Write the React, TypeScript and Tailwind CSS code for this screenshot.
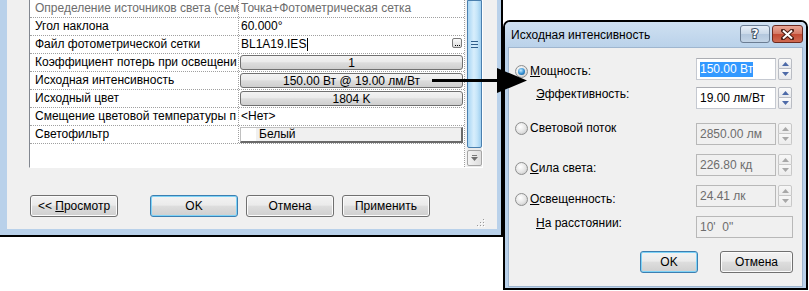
import React from "react";

const btnGrad =
  "bg-[linear-gradient(#f3f3f3,#ebebeb_45%,#dddddd_52%,#cfcfcf)]";

function Row({
  label,
  gray,
  children,
}: {
  label: string;
  gray?: boolean;
  children?: React.ReactNode;
}) {
  return (
    <div className="flex h-[18px] shrink-0 border-b border-dotted border-[#a0a0a0]">
      <div
        className={`w-[209px] shrink-0 border-r border-dotted border-[#a0a0a0] pl-[5px] leading-[17px] overflow-hidden whitespace-nowrap ${
          gray ? "text-[#6d6d6d]" : "text-black"
        }`}
      >
        {label}
      </div>
      <div className="flex-1 min-w-0 flex items-start">{children}</div>
    </div>
  );
}

function GridButton({ text }: { text: string }) {
  return (
    <div
      className={`mt-[1px] mx-[1px] flex-1 h-[15px] rounded-[3px] border border-[#707070] ${btnGrad} flex items-center justify-center leading-none`}
    >
      {text}
    </div>
  );
}

function DlgButton({
  children,
  def,
  w,
}: {
  children: React.ReactNode;
  def?: boolean;
  w: string;
}) {
  return (
    <div
      className={`${w} h-[22px] shrink-0 rounded-[3px] border ${
        def
          ? "border-[#3c7fb1] shadow-[inset_0_0_0_1px_#7fd3f7]"
          : "border-[#707070] shadow-[inset_0_0_0_1px_#fbfbfb]"
      } ${btnGrad} flex items-center justify-center leading-none`}
    >
      {children}
    </div>
  );
}

function Radio({ checked }: { checked?: boolean }) {
  return (
    <div className="w-[13px] h-[13px] shrink-0 rounded-full border border-[#8e8f8f] bg-[radial-gradient(circle_at_40%_35%,#ffffff,#e4e4e4_55%,#bcbcbc)] flex items-center justify-center">
      {checked && (
        <div className="w-[7px] h-[7px] rounded-full bg-[radial-gradient(circle_at_40%_35%,#c9ecff,#3a95d6_50%,#0b4a85)]" />
      )}
    </div>
  );
}

function Tri({ up, color }: { up?: boolean; color: string }) {
  return (
    <svg width="7" height="4" viewBox="0 0 7 4">
      <polygon
        points={up ? "0,4 7,4 3.5,0" : "0,0 7,0 3.5,4"}
        fill={color}
      />
    </svg>
  );
}

function Spinner({ enabled }: { enabled?: boolean }) {
  const c = enabled ? "#4d6aa8" : "#a7a7a7";
  const b = enabled
    ? "border-[#b9bcc3] bg-[linear-gradient(#fbfbfb,#e6e8ec)]"
    : "border-[#c8c8c8] bg-[linear-gradient(#f7f7f7,#ececec)]";
  return (
    <div className="ml-[2px] w-[14px] h-[22px] shrink-0 flex flex-col">
      <div
        className={`h-[11px] border rounded-t-[2px] ${b} flex items-center justify-center`}
      >
        <Tri up color={c} />
      </div>
      <div
        className={`h-[11px] border border-t-0 rounded-b-[2px] ${b} flex items-center justify-center`}
      >
        <Tri color={c} />
      </div>
    </div>
  );
}

function NumBox({
  children,
  enabled,
  spinner = true,
}: {
  children: React.ReactNode;
  enabled?: boolean;
  spinner?: boolean;
}) {
  return (
    <div className="flex">
      <div
        className={`${spinner ? "w-[80px]" : "w-[97px]"} h-[22px] border pl-[3px] flex items-center whitespace-nowrap ${
          enabled
            ? "bg-white border-[#c5c9d1] border-t-[#abadb3] text-black"
            : "bg-[#f0f0f0] border-[#b8b8b8] text-[#6d6d6d]"
        }`}
      >
        {children}
      </div>
      {spinner && <Spinner enabled={enabled} />}
    </div>
  );
}

function MainDialog() {
  return (
    <div className="w-[503px] h-[237px] shrink-0 bg-[#b9d1ea] border-r-2 border-b-2 border-black pl-[7px] pr-[4px] pb-[6px] flex">
      <div className="flex-1 bg-[#f0f0f0] flex flex-col relative">
        <div className="ml-[22px] w-[454px] h-[168px] shrink-0 flex border-l border-b border-r border-l-[#828790] border-b-white border-r-white">
          <div className="w-[435px] shrink-0 bg-white border-r border-dotted border-[#a0a0a0] flex flex-col">
            <Row label="Определение источников света (сем" gray>
              <div className="pl-[2px] leading-[17px] whitespace-nowrap text-[#6d6d6d]">
                Точка+Фотометрическая сетка
              </div>
            </Row>
            <Row label="Угол наклона">
              <div className="pl-[2px] leading-[17px]">60.000°</div>
            </Row>
            <Row label="Файл фотометрической сетки">
              <div className="flex-1 flex items-start">
                <div className="pl-[2px] leading-[17px]">BL1A19.IES</div>
                <div className="mt-[2px] ml-[1px] w-[1px] h-[13px] bg-black" />
                <div className="ml-auto mr-[2px] mt-[2px] w-[10px] h-[10px] rounded-[2px] border border-[#7a7a7a] bg-[linear-gradient(#fafafa,#dcdcdc)] flex items-end justify-center gap-[1px] pb-[1px]">
                  <div className="w-[1px] h-[1px] bg-black" />
                  <div className="w-[1px] h-[1px] bg-black" />
                  <div className="w-[1px] h-[1px] bg-black" />
                </div>
              </div>
            </Row>
            <Row label="Коэффициент потерь при освещени">
              <GridButton text="1" />
            </Row>
            <Row label="Исходная интенсивность">
              <GridButton text="150.00 Вт @ 19.00 лм/Вт" />
            </Row>
            <Row label="Исходный цвет">
              <GridButton text="1804 K" />
            </Row>
            <Row label="Смещение цветовой температуры п">
              <div className="pl-[2px] leading-[17px]">&lt;Нет&gt;</div>
            </Row>
            <Row label="Светофильтр">
              <div className="mt-[1px] mx-[1px] flex-1 h-[16px] flex border border-[#c0c0c0] border-r-2 border-b-2 border-r-[#6a6a6a] border-b-[#6a6a6a]">
                <div className="w-[15px] bg-white" />
                <div className="flex-1 bg-[#f0f0f0] pl-[3px] leading-[13px]">
                  Белый
                </div>
              </div>
            </Row>
          </div>
          <div className="w-[2px] shrink-0 bg-[#f4f4f4]" />
          <div className="w-[15px] shrink-0 flex flex-col bg-[#ebebeb]">
            <div className="h-[148px] shrink-0 rounded-b-[2px] border border-[#4a7fae] bg-[linear-gradient(to_right,#a9d6f4,#d8eefc_45%,#c5e5f9_70%,#9fcff0)] flex flex-col items-center pt-[40px] gap-[2px]">
              <div className="w-[7px] h-[1px] bg-[#2f5f8c]" />
              <div className="w-[7px] h-[1px] bg-[#2f5f8c]" />
              <div className="w-[7px] h-[1px] bg-[#2f5f8c]" />
            </div>
            <div className="mt-[2px] h-[16px] shrink-0 rounded-[2px] border border-[#a5a5a5] bg-[linear-gradient(to_right,#f4f4f4,#dedede)] flex flex-col items-center justify-center gap-[1px]">
              <div className="w-[5px] h-[1px] bg-[#7a7a7a]" />
              <Tri color="#6f6f6f" />
            </div>
          </div>
        </div>
        <div className="mt-[27px] ml-[23px] flex">
          <DlgButton w="w-[88px]">
            &lt;&lt;&nbsp;<span className="underline">П</span>росмотр
          </DlgButton>
          <div className="ml-[32px]">
            <DlgButton w="w-[88px]" def>
              OK
            </DlgButton>
          </div>
          <div className="ml-[8px]">
            <DlgButton w="w-[88px]">Отмена</DlgButton>
          </div>
          <div className="ml-[8px]">
            <DlgButton w="w-[88px]">Применить</DlgButton>
          </div>
        </div>
        <svg
          className="absolute right-[12px] bottom-[1px]"
          width="9"
          height="9"
          viewBox="0 0 9 9"
        >
          {[
            [7, 0],
            [4, 3],
            [7, 3],
            [1, 6],
            [4, 6],
            [7, 6],
          ].map(([x, y], i) => (
            <g key={i}>
              <rect x={x + 1} y={y + 1} width="1" height="1" fill="#ffffff" />
              <rect x={x} y={y} width="1" height="1" fill="#9a9a9a" />
            </g>
          ))}
        </svg>
      </div>
    </div>
  );
}

function SecondDialog() {
  return (
    <div className="mt-[20px] w-[305px] h-[270px] shrink-0 border-2 border-black rounded-t-[7px] bg-[#b9d1ea] flex flex-col">
      <div className="h-[25px] shrink-0 flex items-start rounded-t-[5px] bg-[linear-gradient(#cfe0f1,#bad2ea)]">
        <div className="pl-[6px] pt-[1px] leading-[25px] text-black">
          Исходная интенсивность
        </div>
        <div className="ml-auto mt-[3px] mr-[3px] flex gap-[2px]">
          <div className="w-[30px] h-[18px] rounded-[3px] border border-[#6b7d93] bg-[linear-gradient(#e6eef7,#c9d8e8_50%,#b3c7dd_52%,#c3d4e6)] flex items-center justify-center">
            <span className="font-['DejaVu_Sans',sans-serif] font-bold text-[12px] leading-none text-white [-webkit-text-stroke:2px_#3f4f63] [paint-order:stroke_fill]">
              ?
            </span>
          </div>
          <div className="w-[31px] h-[18px] rounded-[3px] border border-[#6b2a20] bg-[linear-gradient(#e9a797,#d47a66_48%,#c24a33_52%,#cf6a52)] flex items-center justify-center">
            <svg width="13" height="11" viewBox="0 0 13 11">
              <path
                d="M2 1.5 L11 9.5 M11 1.5 L2 9.5"
                stroke="#4a1d14"
                strokeWidth="4"
                strokeLinecap="square"
              />
              <path
                d="M2 1.5 L11 9.5 M11 1.5 L2 9.5"
                stroke="#ffffff"
                strokeWidth="2"
              />
            </svg>
          </div>
        </div>
      </div>
      <div className="flex-1 mx-[3px] mb-[1px] bg-[#f0f0f0] flex flex-col pt-[10px] border border-[#9fb6cf]">
        <div className="flex h-[22px] shrink-0">
          <div className="w-[187px] shrink-0 mt-[6px] h-[14px] pl-[6px] flex items-center gap-[2px]">
            <Radio checked />
            <span className="leading-[14px]">
              <span className="underline">М</span>ощность:
            </span>
          </div>
          <NumBox enabled>
            <span className="bg-[#3399ff] text-white leading-[15px]">
              150.00 Вт
            </span>
          </NumBox>
        </div>
        <div className="flex h-[22px] shrink-0 mt-[7px]">
          <div className="w-[187px] shrink-0 mt-[0px] h-[14px] pl-[27px] leading-[14px]">
            <span className="underline">Э</span>ффективность:
          </div>
          <NumBox enabled>19.00 лм/Вт</NumBox>
        </div>
        <div className="flex h-[22px] shrink-0 mt-[14px]">
          <div className="w-[187px] shrink-0 mt-[-2px] h-[14px] pl-[6px] flex items-center gap-[2px]">
            <Radio />
            <span className="leading-[14px]">Световой поток</span>
          </div>
          <NumBox>2850.00 лм</NumBox>
        </div>
        <div className="flex h-[22px] shrink-0 mt-[9px]">
          <div className="w-[187px] shrink-0 mt-[7px] h-[14px] pl-[6px] flex items-center gap-[2px]">
            <Radio />
            <span className="leading-[14px]">
              <span className="underline">С</span>ила света:
            </span>
          </div>
          <NumBox>226.80 кд</NumBox>
        </div>
        <div className="flex h-[22px] shrink-0 mt-[9px]">
          <div className="w-[187px] shrink-0 mt-[7px] h-[14px] pl-[6px] flex items-center gap-[2px]">
            <Radio />
            <span className="leading-[14px]">
              <span className="underline">О</span>свещенность:
            </span>
          </div>
          <NumBox>24.41 лк</NumBox>
        </div>
        <div className="flex h-[22px] shrink-0 mt-[9px]">
          <div className="w-[187px] shrink-0 mt-[0px] h-[14px] pl-[27px] leading-[14px]">
            <span className="underline">Н</span>а расстоянии:
          </div>
          <NumBox spinner={false}>10'&nbsp;&nbsp;0"</NumBox>
        </div>
        <div className="flex mt-[13px] pl-[131px]">
          <DlgButton w="w-[58px]" def>
            OK
          </DlgButton>
          <div className="ml-[22px]">
            <DlgButton w="w-[73px]">Отмена</DlgButton>
          </div>
        </div>
      </div>
    </div>
  );
}

export default function App() {
  return (
    <div className="relative w-[809px] h-[291px] bg-white overflow-hidden font-['Liberation_Sans',Arial,sans-serif] text-[12px] text-black">
      <div className="flex items-start">
        <MainDialog />
        <SecondDialog />
      </div>
      <svg
        className="absolute left-0 top-0 pointer-events-none"
        width="809"
        height="291"
        viewBox="0 0 809 291"
      >
        <rect x="432" y="79" width="70" height="3" fill="#000" />
        <polygon points="497,68 527,80.5 497,93" fill="#000" />
      </svg>
    </div>
  );
}
